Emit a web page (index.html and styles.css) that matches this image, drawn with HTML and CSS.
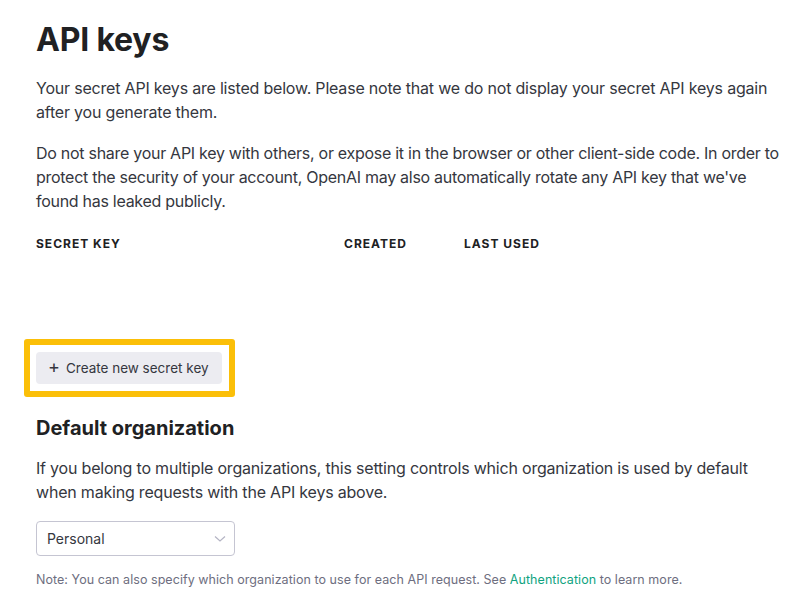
FILE: index.html
```html
<!DOCTYPE html>
<html>
<head>
<meta charset="utf-8">
<link rel="stylesheet" href="styles.css">
</head>
<body>
<main class="page">
  <h1 class="title">API keys</h1>
  <p class="text">Your secret API keys are listed below. Please note that we do not display your secret API keys again after you generate them.</p>
  <p class="text text-wide">Do not share your API key with others, or expose it in the browser or other client-side code. In order to protect the security of your account, OpenAI may also automatically rotate any API key that we've <span class="nowrap">found has</span> leaked publicly.</p>
  <div class="table-head">
    <span class="col col-key">Secret key</span>
    <span class="col col-created">Created</span>
    <span class="col col-used">Last used</span>
  </div>
  <div class="highlight">
    <button class="btn"><span class="plus">+</span>Create new secret key</button>
  </div>
  <h2 class="subtitle">Default organization</h2>
  <p class="text">If you belong to multiple organizations, this setting controls which organization is used by default when making requests with the API keys above.</p>
  <div class="select">
    <span>Personal</span>
    <svg class="chev" width="12" height="8" viewBox="0 0 12 8"><path d="M1 1.5 L6 6 L11 1.5" fill="none" stroke="#b4b4c4" stroke-width="1.2"/></svg>
  </div>
  <p class="note">Note: You can also specify which organization to use for each API request. See <a class="link">Authentication</a> to learn more.</p>
</main>
</body>
</html>
```
FILE: styles.css
```css
html, body { margin: 0; padding: 0; background: #fff; }
body { font-family: Inter, "Noto Sans", sans-serif; color: #353740; }
.page { padding: 20px 0 0 36px; }
.title { margin: 0; font-size: 32px; font-weight: 700; color: #202123; line-height: 40px; letter-spacing: -0.2px; }
.text { margin: 16px 0 0; max-width: 740px; font-size: 16px; line-height: 24px; color: #353740; letter-spacing: -0.2px; }
.text + .text { margin-top: 17px; }
.text-wide { max-width: none; letter-spacing: -0.28px; }
.nowrap { white-space: nowrap; }
.table-head { display: flex; margin-top: 22px; height: 16px; align-items: center; }
.col { font-size: 12px; font-weight: 700; text-transform: uppercase; letter-spacing: 1px; color: #202123; }
.col-key { width: 308px; }
.col-created { width: 120px; }
.highlight { margin: 88px 0 0 -12px; width: 193px; height: 39px; border: 6px solid #fbbf08; border-radius: 3px; padding: 7px 0 0 6px; box-sizing: content-box; }
.btn { display: flex; align-items: center; gap: 6px; height: 32px; width: 186px; padding: 0 0 0 12px; border: 0; border-radius: 4px; background: #ececf1; color: #353740; font-family: inherit; font-size: 13.5px; box-sizing: border-box; }
.plus { font-size: 18px; font-weight: 400; line-height: 1; margin-top: -2px; }
.subtitle { margin: 17px 0 0; font-size: 20px; font-weight: 700; color: #202123; line-height: 28px; }
.subtitle + .text { margin-top: 14px; }
.select { display: flex; align-items: center; justify-content: space-between; margin-top: 17px; width: 199px; height: 35px; border: 1px solid #c5c5d2; border-radius: 4px; padding: 0 8px 0 10px; box-sizing: border-box; font-size: 14px; color: #353740; }
.note { margin: 16px 0 0; font-size: 12.5px; line-height: 16px; letter-spacing: 0.05px; color: #6e6e80; }
.link { color: #10a37f; text-decoration: none; }
```
